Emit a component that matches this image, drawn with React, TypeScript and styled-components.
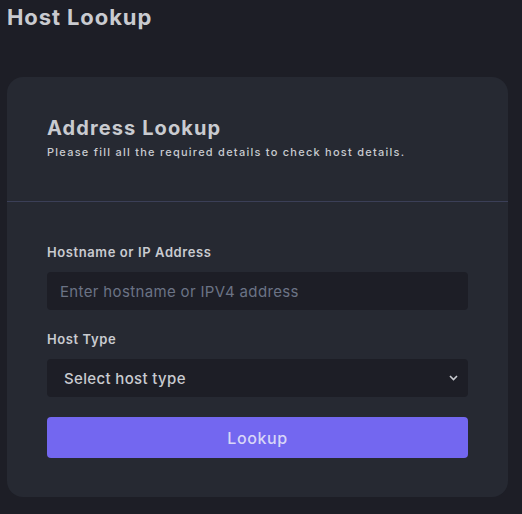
import React from "react";
import styled, { createGlobalStyle } from "styled-components";

const Global = createGlobalStyle`
  html, body { margin: 0; padding: 0; background: #1d1e26; }
  body { font-family: Inter, "Noto Sans", sans-serif; color: #d0d2d6; }
  * { box-sizing: border-box; }
`;

const Page = styled.div`
  padding: 0 14px 0 7px;
  min-height: 514px;
`;

const PageTitle = styled.h1`
  margin: 0;
  padding-top: 4px;
  height: 77px;
  font-size: 22px;
  font-weight: 700;
  color: #c9cbd0;
  letter-spacing: 0.9px;
`;

const Card = styled.div`
  background: #262932;
  border-radius: 16px;
  width: 501px;
  height: 420px;
  display: flex;
  flex-direction: column;
`;

const CardHeader = styled.div`
  height: 125px;
  padding: 38px 40px 0;
  border-bottom: 1px solid #3b3f57;
`;

const CardTitle = styled.h2`
  margin: 0;
  font-size: 20px;
  font-weight: 700;
  color: #c9cbd0;
  line-height: 26px;
  letter-spacing: 1.1px;
`;

const CardSubtitle = styled.p`
  margin: 4px 0 0;
  font-size: 11px;
  font-weight: 500;
  letter-spacing: 1.25px;
  color: #c9cbd0;
`;

const Form = styled.form`
  padding: 41px 40px 0;
  display: flex;
  flex-direction: column;
`;

const Label = styled.label`
  font-size: 13px;
  font-weight: 600;
  color: #c9cbd0;
  line-height: 18px;
  margin-bottom: 11px;
  letter-spacing: 0.6px;
`;

const Input = styled.input`
  height: 38px;
  width: 100%;
  background: #1d1e26;
  border: none;
  border-radius: 4px;
  padding: 0 13px;
  font-family: inherit;
  font-size: 15px;
  letter-spacing: 0.35px;
  color: #d0d2d6;
  outline: none;
  margin-bottom: 20px;
  &::placeholder { color: #6b7385; }
`;

const SelectWrap = styled.div`
  position: relative;
  height: 38px;
  margin-bottom: 20px;
`;

const Select = styled.select`
  appearance: none;
  width: 100%;
  height: 38px;
  background: #1d1e26;
  border: none;
  border-radius: 4px;
  padding: 0 17px;
  font-family: inherit;
  font-size: 15px;
  font-weight: 500;
  letter-spacing: 0.35px;
  color: #c9cbd0;
  outline: none;
`;

const Chevron = styled.svg`
  position: absolute;
  right: 10px;
  top: 16px;
  pointer-events: none;
`;

const Button = styled.button`
  height: 41px;
  width: 100%;
  background: #7367f0;
  border: none;
  border-radius: 4px;
  font-family: inherit;
  font-size: 16px;
  font-weight: 500;
  letter-spacing: 0.6px;
  color: #d8d6f7;
  cursor: pointer;
`;

export default function App() {
  return (
    <>
      <Global />
      <Page>
        <PageTitle>Host Lookup</PageTitle>
        <Card>
          <CardHeader>
            <CardTitle>Address Lookup</CardTitle>
            <CardSubtitle>Please fill all the required details to check host details.</CardSubtitle>
          </CardHeader>
          <Form onSubmit={(e) => e.preventDefault()}>
            <Label>Hostname or IP Address</Label>
            <Input placeholder="Enter hostname or IPV4 address" />
            <Label>Host Type</Label>
            <SelectWrap>
              <Select defaultValue="">
                <option value="">Select host type</option>
              </Select>
              <Chevron width="9" height="6" viewBox="0 0 9 6">
                <path d="M1 1l3.5 3.5L8 1" stroke="#c9cbd0" strokeWidth="1.6" fill="none" />
              </Chevron>
            </SelectWrap>
            <Button type="submit">Lookup</Button>
          </Form>
        </Card>
      </Page>
    </>
  );
}
